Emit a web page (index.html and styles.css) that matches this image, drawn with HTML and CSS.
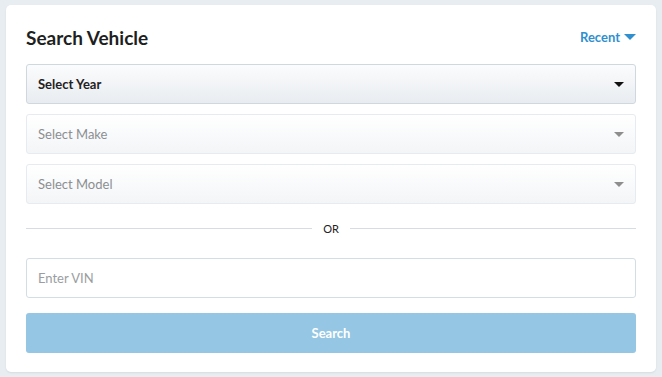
FILE: index.html
```html
<!DOCTYPE html>
<html lang="en">
<head>
    <meta charset="UTF-8">
    <meta name="viewport" content="width=device-width, initial-scale=1.0">
    <title>Search Vehicle</title>
    <link rel="stylesheet" href="styles.css">
</head>
<body>

    <!-- search card -->
    <div class="card">
        <div class="card-head">
            <h2>Search Vehicle</h2>
            <a href="#" class="recent">Recent <span class="caret"></span></a>
        </div>

        <div class="select active">
            <span>Select Year</span>
            <span class="arrow"></span>
        </div>
        <div class="select">
            <span>Select Make</span>
            <span class="arrow"></span>
        </div>
        <div class="select">
            <span>Select Model</span>
            <span class="arrow"></span>
        </div>

        <div class="divider"><span>OR</span></div>

        <input type="text" class="vin" placeholder="Enter VIN">
        <button type="button" class="search-btn">Search</button>
    </div>

</body>
</html>
```

FILE: styles.css
```css
body {
    font-family: Lato, "Noto Sans", sans-serif;
    margin: 0;
    padding: 5px 6px;
    background-color: #e8edf1;
    color: #222;
}

/* card */
.card {
    background-color: white;
    border-radius: 5px;
    padding: 19px 20px 19px;
    box-shadow: 0 1px 2px rgba(0, 0, 0, 0.08);
}

.card-head {
    display: flex;
    justify-content: space-between;
    align-items: center;
    height: 26px;
    margin-bottom: 14px;
}

.card-head h2 {
    margin: 0;
    font-size: 19px;
    font-weight: 700;
    color: #1d1f21;
}

.recent {
    display: flex;
    align-items: center;
    gap: 4px;
    color: #2f8fcf;
    text-decoration: none;
    font-size: 13px;
    font-weight: 700;
}

.caret {
    width: 0;
    height: 0;
    border-left: 6px solid transparent;
    border-right: 6px solid transparent;
    border-top: 6px solid #2f8fcf;
}

/* dropdowns */
.select {
    display: flex;
    justify-content: space-between;
    align-items: center;
    height: 40px;
    box-sizing: border-box;
    padding: 0 11px 0 11px;
    margin-bottom: 10px;
    border: 1px solid #e6ebef;
    border-radius: 3px;
    background: linear-gradient(#ffffff, #f3f5f7);
    font-size: 13px;
    color: #8c8f92;
}

.select .arrow {
    width: 0;
    height: 0;
    border-left: 5px solid transparent;
    border-right: 5px solid transparent;
    border-top: 5px solid #8e8e8e;
}

.select.active {
    border-color: #cfd8df;
    background: linear-gradient(#fbfcfd, #e8ecf0);
    color: #1f2123;
    font-weight: 700;
}

.select.active .arrow {
    border-top-color: #111;
}

/* OR line */
.divider {
    display: flex;
    align-items: center;
    gap: 11px;
    height: 28px;
    margin: 4px 0 16px;
    font-size: 11px;
    color: #222;
}

.divider::before, .divider::after {
    content: "";
    flex: 1;
    border-top: 1px solid #d5dde3;
}

/* VIN + button */
.vin {
    display: block;
    width: 100%;
    height: 40px;
    box-sizing: border-box;
    padding: 0 11px;
    border: 1px solid #d3dde4;
    border-radius: 3px;
    font-family: inherit;
    font-size: 13px;
    margin-bottom: 15px;
}

.vin::placeholder {
    color: #9a9ea2;
}

.search-btn {
    display: block;
    width: 100%;
    height: 40px;
    border: none;
    border-radius: 3px;
    background-color: #95c6e3;
    color: white;
    font-family: inherit;
    font-size: 13px;
    font-weight: 700;
}
```
